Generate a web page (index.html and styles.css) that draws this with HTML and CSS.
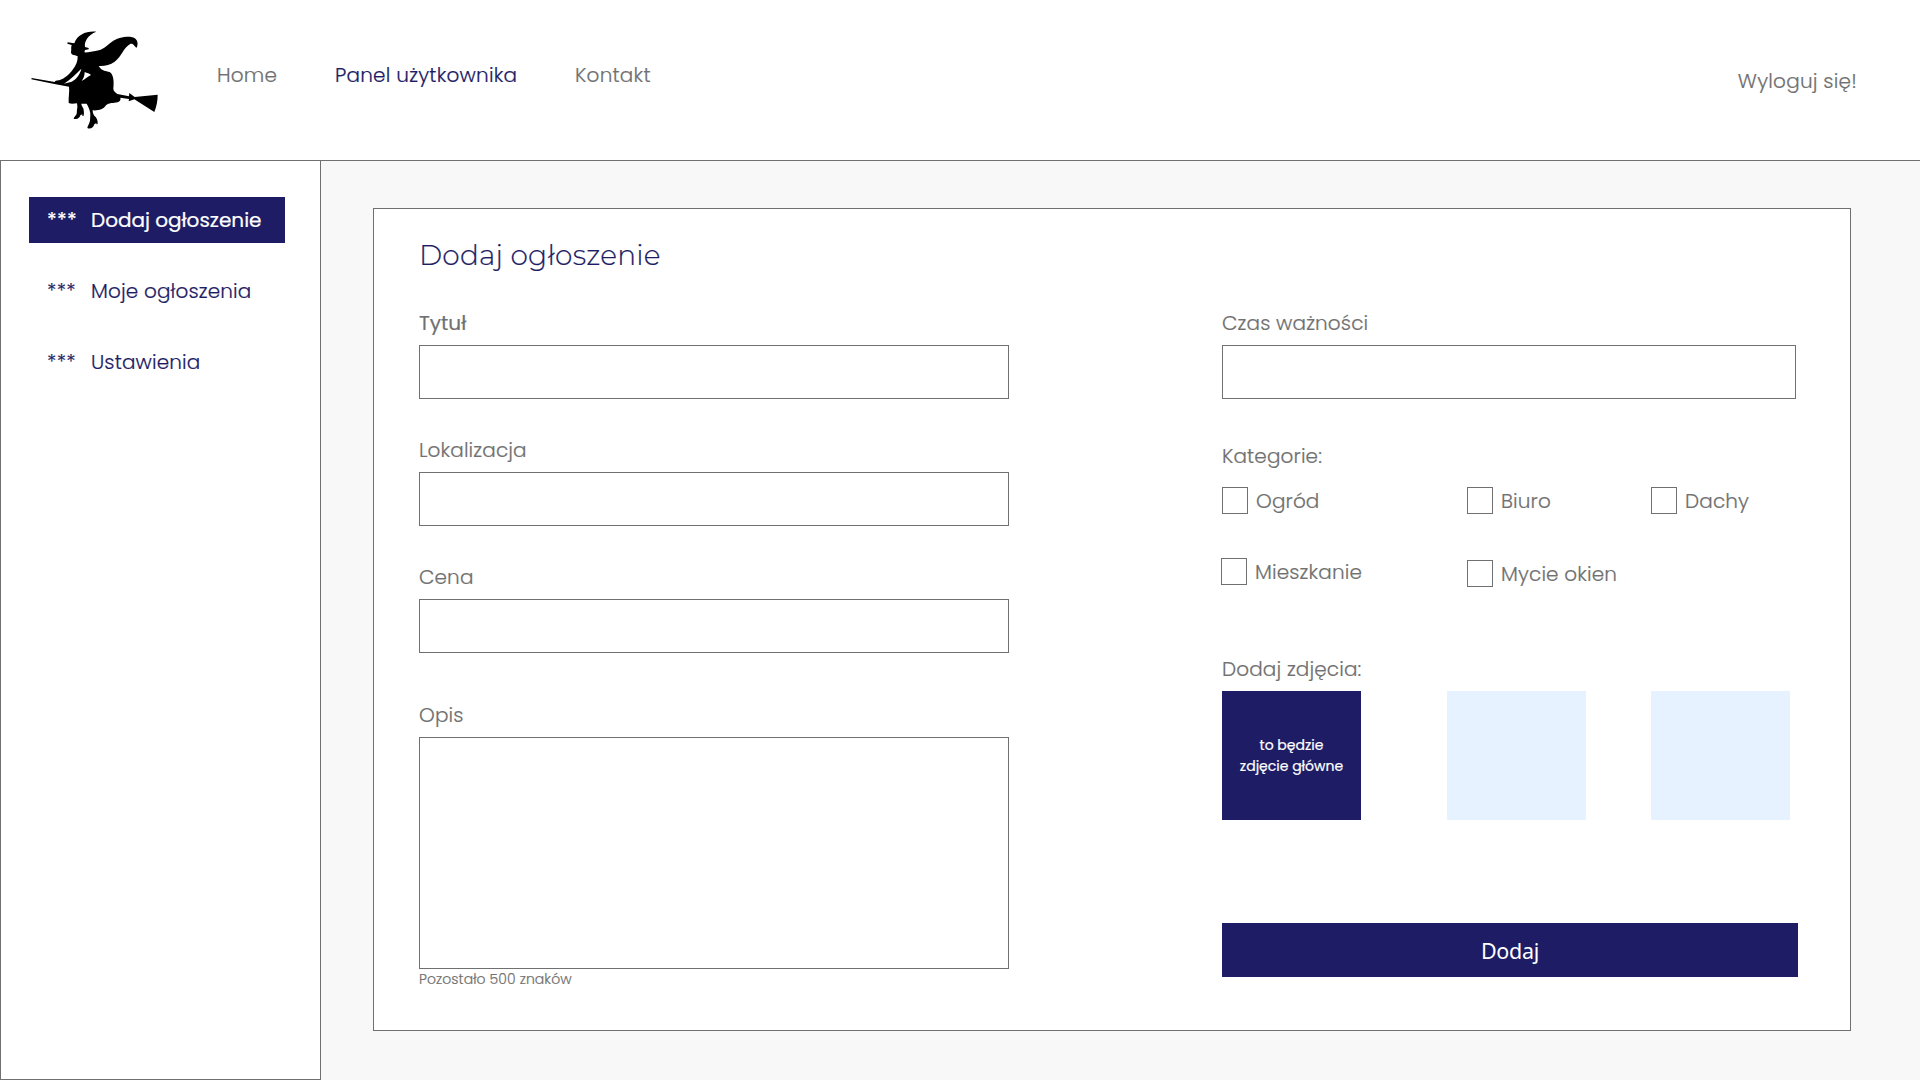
FILE: index.html
```html
<!DOCTYPE html>
<html lang="pl">
<head>
<meta charset="utf-8">
<title>Dodaj ogłoszenie</title>
<link rel="stylesheet" href="styles.css">
</head>
<body>
<header class="header">
  <svg class="logo" viewBox="0 0 450 360" aria-label="Logo">
    <path d="M229 35 C201 32 172 43 163 70 L143 67 L142 71 L155 75 C152 83 155 89 153 95 C152 102 158 105 165 106 L173 109 C174 122 168 137 159 148 C148 164 132 177 118 181 C111 180 105 183 104 186 L35 174 L34 178 L103 192 L147 200 C149 215 145 232 146 249 C153 253 163 251 171 250 C172 257 173 263 171 268 L170 282 C166 289 161 293 161 296 C170 299 178 296 181 286 L187 283 L187 288 L191 287 C193 279 191 271 190 265 C187 260 184 255 184 251 L200 251 C205 260 212 274 211 286 L210 302 C208 312 202 319 202 324 C210 328 219 325 223 313 L229 309 L229 313 L233 312 C234 301 230 292 223 287 C219 282 218 276 218 271 C235 272 250 269 258 256 C266 248 281 250 293 247 C300 244 303 239 301 233 L327 237 L326 244 L343 238 L403 276 C410 259 413 242 413 224 L344 231 L328 219 L327 229 L292 222 C285 217 280 212 280 206 C282 190 282 166 270 157 C259 152 246 155 236 138 C254 139 270 135 284 125 C306 109 309 83 332 71 C342 70 342 79 350 83 C357 69 351 53 334 51 C314 49 290 55 275 66 C258 79 248 90 230 92 C218 94 203 98 193 97 L195 90 L206 88 L206 84 L195 81 C192 65 204 44 229 35Z M184 146 L183 151 C178 166 168 179 155 185 L132 191 C151 179 168 162 184 146Z M194 156 C201 160 209 160 213 165 C204 170 196 177 185 183 C191 174 194 167 194 156Z"/>
  </svg>
  <nav class="nav">
    <a>Home</a>
    <a class="current">Panel użytkownika</a>
    <a>Kontakt</a>
  </nav>
  <a class="logout">Wyloguj się!</a>
</header>
<div class="body">
  <aside class="sidebar">
    <a class="item active"><span class="stars">***</span><span>Dodaj ogłoszenie</span></a>
    <a class="item"><span class="stars">***</span><span>Moje ogłoszenia</span></a>
    <a class="item"><span class="stars">***</span><span>Ustawienia</span></a>
  </aside>
  <main class="main">
    <section class="card">
      <h1 class="title">Dodaj ogłoszenie</h1>
      <div class="columns">
        <div class="left">
          <div class="field"><label class="strong">Tytuł</label><div class="input"></div></div>
          <div class="field"><label>Lokalizacja</label><div class="input"></div></div>
          <div class="field"><label>Cena</label><div class="input"></div></div>
          <div class="field desc"><label>Opis</label><div class="input area"></div><p class="count">Pozostało 500 znaków</p></div>
        </div>
        <div class="right">
          <div class="field"><label>Czas ważności</label><div class="input date"></div></div>
          <p class="cat">Kategorie:</p>
          <div class="checks">
            <div class="check"><i class="box"></i>Ogród</div>
            <div class="check"><i class="box"></i>Biuro</div>
            <div class="check"><i class="box"></i>Dachy</div>
            <div class="check flat"><i class="box"></i>Mieszkanie</div>
            <div class="check windows"><i class="box"></i>Mycie okien</div>
          </div>
          <p class="photos-label">Dodaj zdjęcia:</p>
          <div class="photos">
            <div class="photo primary">to będzie<br>zdjęcie główne</div>
            <div class="photo"></div>
            <div class="photo"></div>
          </div>
          <div class="submit">Dodaj</div>
        </div>
      </div>
    </section>
  </main>
</div>
</body>
</html>
```
FILE: styles.css
```css
* { box-sizing: border-box; margin: 0; }
body {
  width: 1920px; height: 1080px; overflow: hidden;
  display: flex; flex-direction: column;
  background: #fff; color: #707070;
  font-family: Poppins, Inter, sans-serif; font-size: 20px; font-weight: 300; line-height: 30px;
  letter-spacing: .13px; -webkit-text-stroke: .2px currentColor;
}

.header { height: 160px; flex: none; display: flex; padding: 20px 63px 0 20px; letter-spacing: .22px; }
.logo { width: 150px; height: 120px; flex: none; fill: #000; }
.nav { display: grid; grid-template-columns: 118px 240px auto; margin-left: 47px; padding-top: 40px; }
.current { color: #1d1c65; }
.logout { margin-left: auto; padding-top: 46px; }

.body { display: flex; flex: 1; }
.sidebar {
  width: 321px; padding: 36px 0 0 28px;
  display: flex; flex-direction: column; gap: 25px;
  border: 1px solid #707070; background: #fff; color: #1d1c65;
}
.item { width: 256px; height: 46px; display: flex; align-items: center; padding-left: 18px; }
.item .stars { width: 44px; letter-spacing: .3px; }
.active { background: #1d1c65; color: #fff; font-weight: 400; letter-spacing: 0; }

.main { flex: 1; padding: 47px 0 0 52px; border-top: 1px solid #707070; background: #f8f8f8; }
.card { width: 1478px; height: 823px; padding: 26px 0 0 45px; border: 1px solid #707070; background: #fff; }
.title {
  height: 40px; line-height: 40px; color: #1d1c65;
  font-family: Montserrat, Poppins, sans-serif; font-size: 28px; font-weight: 300; letter-spacing: .2px;
}
.columns { display: flex; justify-content: space-between; padding: 33px 52px 0 0; }
.left { width: 590px; display: flex; flex-direction: column; gap: 36px; }
.field { display: flex; flex-direction: column; gap: 7px; }
.strong { font-weight: 400; letter-spacing: 0; }
.input { height: 54px; border: 1px solid #707070; }
.desc { padding-top: 11px; }
.area { height: 232px; }
.count { margin-top: -7px; font-size: 14px; line-height: 20px; letter-spacing: .08px; }

.right { width: 576px; }
.date { width: 574px; }
.cat { margin-top: 42px; }
.checks { display: grid; grid-template-columns: 245px 184px auto; row-gap: 44px; margin-top: 16px; }
.check { display: flex; align-items: flex-start; gap: 8px; height: 27px; line-height: 28px; }
.box { width: 26px; height: 27px; flex: none; border: 1px solid #707070; }
.flat { margin-left: -1px; }
.windows { margin-top: 2px; }
.photos-label { margin-top: 67px; }
.photos { display: grid; grid-template-columns: 225px 204px auto; margin-top: 7px; }
.photo { width: 139px; height: 129px; background: #e6f2ff; }
.primary {
  display: flex; flex-direction: column; justify-content: center;
  background: #1d1c65; color: #fff; text-align: center;
  font-size: 14px; font-weight: 400; line-height: 21px; letter-spacing: 0;
}
.submit {
  height: 54px; line-height: 55px; margin-top: 103px;
  background: #1d1c65; color: #fff; text-align: center;
  font-family: "Segoe UI", "Noto Sans", sans-serif; font-size: 21.5px; font-weight: 400; letter-spacing: -.3px;
  -webkit-text-stroke: 0;
}
```
